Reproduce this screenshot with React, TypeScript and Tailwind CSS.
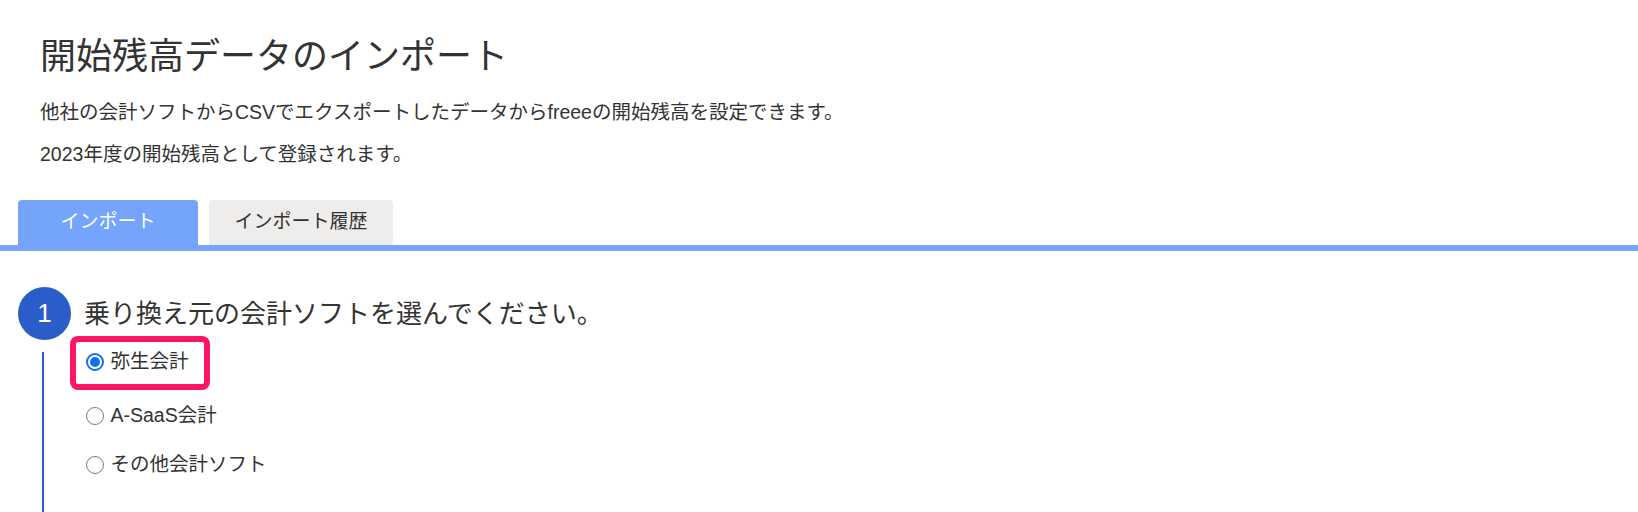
const font = "font-['Liberation_Sans','Noto_Sans_CJK_JP',sans-serif]";

function Radio({ checked }: { checked?: boolean }) {
  return checked ? (
    <span className="flex h-[18px] w-[18px] shrink-0 items-center justify-center rounded-full border-2 border-[#0f6ff5] bg-white">
      <span className="h-[10px] w-[10px] rounded-full bg-[#0f6ff5]" />
    </span>
  ) : (
    <span className="h-[18px] w-[18px] shrink-0 rounded-full border-[1.5px] border-[#7a7a7a] bg-white" />
  );
}

export default function App() {
  return (
    <div className={`h-[512px] w-[1638px] overflow-hidden bg-white text-[#333] ${font}`}>
      <div className="pl-[40px] pt-[39px]">
        <h1 className="text-[36px] leading-[36px] font-normal">開始残高データのインポート</h1>
        <p className="mt-[27px] text-[19.5px] leading-[20px]">
          他社の会計ソフトからCSVでエクスポートしたデータからfreeeの開始残高を設定できます。
        </p>
        <p className="mt-[22px] text-[19.5px] leading-[20px]">2023年度の開始残高として登録されます。</p>
      </div>

      <div className="mt-[36px] flex gap-[11px] pl-[18px]">
        <div className="flex h-[45px] w-[180px] items-center justify-center rounded-t-[4px] bg-[#74a4fc] text-[19px] text-white">
          インポート
        </div>
        <div className="flex h-[45px] w-[184px] items-center justify-center rounded-t-[4px] bg-[#eeedeb] text-[19px] text-[#333]">
          インポート履歴
        </div>
      </div>
      <div className="h-[6px] bg-[#74a4fc]" />

      <div className="mt-[36px] pl-[18px]">
        <div className="flex items-center gap-[13px]">
          <div className="flex h-[53px] w-[53px] items-center justify-center rounded-full bg-[#2b5dc9] text-[26px] text-white">
            1
          </div>
          <h2 className="text-[26px] leading-[30px] font-normal">乗り換え元の会計ソフトを選んでください。</h2>
        </div>

        <div className="-mt-[4px] flex">
          <div className="w-[24px] shrink-0" />
          <div className="mt-[16px] w-[1.5px] shrink-0 bg-[#2b5dc9]" />
          <div className="ml-[26px] flex flex-col pb-[60px] text-[19.5px]">
            <div className="flex h-[54px] w-[140px] items-center gap-[7px] rounded-[8px] border-[6px] border-[#fe1562] pb-[2px] pl-[10px]">
              <Radio checked />
              <span>弥生会計</span>
            </div>
            <div className="mt-[11px] flex h-[30px] items-center gap-[7px] pl-[16px]">
              <Radio />
              <span>A-SaaS会計</span>
            </div>
            <div className="mt-[19px] flex h-[30px] items-center gap-[7px] pl-[16px]">
              <Radio />
              <span>その他会計ソフト</span>
            </div>
          </div>
        </div>
      </div>
    </div>
  );
}
